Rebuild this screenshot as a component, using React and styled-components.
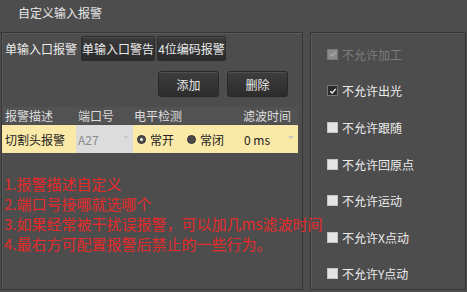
import React from "react";
import styled, { createGlobalStyle } from "styled-components";

const Global = createGlobalStyle`
  html, body { margin: 0; padding: 0; background: #4d4d4d; }
  body { font-family: "Noto Sans CJK SC", "Noto Sans", sans-serif; }
`;

const Window = styled.div`
  width: 467px;
  height: 292px;
  background: #4d4d4d;
  display: flex;
  flex-direction: column;
  overflow: hidden;
  color: #e8e8e8;
  font-size: 12px;
`;

const Title = styled.div`
  height: 32px;
  box-sizing: border-box;
  padding: 5px 0 0 18px;
  font-size: 12px;
  line-height: 16px;
  color: #e6e6e6;
`;

const Body = styled.div`
  display: flex;
  gap: 7px;
  padding-left: 1px;
  height: 258px;
`;

const Panel = styled.div`
  box-sizing: border-box;
  width: ${(p) => p.$w}px;
  height: 100%;
  border: 1px solid #363636;
  box-shadow: inset 1px 1px 0 #5a5a5a;
  background: #4d4d4d;
  position: relative;
`;

const Tabs = styled.div`
  display: flex;
  gap: 2px;
  padding: 3px 0 0 1px;
`;

const Tab = styled.div`
  box-sizing: border-box;
  width: ${(p) => p.$w}px;
  height: 25px;
  display: flex;
  align-items: center;
  justify-content: center;
  font-size: 12px;
  color: #ececec;
  ${(p) =>
    p.$active
      ? `background: transparent;`
      : `background: linear-gradient(#3c3c3c, #2a2a2a);
         border: 1px solid #2c2c2c;
         border-radius: 2px;
         box-shadow: inset 0 1px 0 #4a4a4a;`}
`;

const ButtonRow = styled.div`
  display: flex;
  justify-content: flex-end;
  gap: 8px;
  padding: 10px 14px 0 0;
`;

const Button = styled.div`
  box-sizing: border-box;
  width: 61px;
  height: 26px;
  display: flex;
  align-items: center;
  justify-content: center;
  background: linear-gradient(#3e3e3e, #2c2c2c);
  border: 1px solid #292929;
  border-radius: 3px;
  box-shadow: inset 0 1px 0 #505050;
  color: #e8e8e8;
  font-size: 12px;
`;

const Table = styled.div`
  margin-top: 10px;
  width: 296px;
`;

const HeaderRow = styled.div`
  display: grid;
  grid-template-columns: 74px 57px 108px 57px;
  height: 17px;
  align-items: center;
  background: #525252;
  color: #dcdcdc;
  font-size: 12px;
`;

const HeadCell = styled.div`
  padding-left: ${(p) => p.$pl || 3}px;
`;

const DataRow = styled.div`
  display: grid;
  grid-template-columns: 74px 57px 108px 57px;
  height: 28px;
  margin-top: 1px;
  background: #fbe9a8;
  color: #222;
  font-size: 12px;
`;

const Cell = styled.div`
  display: flex;
  align-items: center;
  position: relative;
  padding-left: ${(p) => p.$pl || 3}px;
  background: ${(p) => p.$bg || "transparent"};
  color: ${(p) => p.$color || "#222"};
`;

const Caret = styled.span`
  position: absolute;
  right: ${(p) => p.$r}px;
  top: 11px;
  width: 0;
  height: 0;
  border-left: 3px solid transparent;
  border-right: 3px solid transparent;
  border-top: 3px solid #c8c8c8;
`;

const RadioGroup = styled.div`
  display: flex;
  align-items: center;
`;

const RadioItem = styled.div`
  display: flex;
  align-items: center;
  width: ${(p) => p.$w}px;
`;

const RadioDot = styled.span`
  box-sizing: border-box;
  width: 9px;
  height: 9px;
  border-radius: 50%;
  background: #4a4a4a;
  border: 1px solid #333;
  margin-right: 4px;
  display: flex;
  align-items: center;
  justify-content: center;
  &::after {
    content: "";
    width: 3px;
    height: 3px;
    border-radius: 50%;
    background: ${(p) => (p.$on ? "#f4f4f4" : "transparent")};
  }
`;

const Notes = styled.div`
  margin-top: 21px;
  padding-left: 2px;
  color: #e42b2b;
  font-size: 15px;
  line-height: 20px;
  white-space: nowrap;
  position: relative;
  z-index: 2;
`;

const CheckList = styled.div`
  display: flex;
  flex-direction: column;
  gap: 24px;
  padding: 15px 0 0 16px;
`;

const CheckRow = styled.div`
  display: flex;
  align-items: center;
  height: 12.6px;
  font-size: 12px;
  color: ${(p) => (p.$disabled ? "#7c7c7c" : "#ececec")};
`;

const Box = styled.span`
  box-sizing: border-box;
  width: 11px;
  height: 11px;
  margin-right: 4px;
  display: flex;
  align-items: center;
  justify-content: center;
  background: ${(p) =>
    p.$disabled ? "#8a8a8a" : p.$checked ? "#2b2b2b" : "#e4e4e4"};
  border: 1px solid ${(p) => (p.$disabled ? "#7a7a7a" : p.$checked ? "#777" : "#c4c4c4")};
`;

const Check = ({ color }) => (
  <svg width="8" height="8" viewBox="0 0 8 8">
    <path d="M1.2 4.2 L3.2 6 L6.8 1.8" fill="none" stroke={color} strokeWidth="1.3" />
  </svg>
);

const checks = [
  { label: "不允许加工", disabled: true, checked: true },
  { label: "不允许出光", checked: true },
  { label: "不允许跟随" },
  { label: "不允许回原点" },
  { label: "不允许运动" },
  { label: "不允许X点动" },
  { label: "不允许Y点动" },
];

export default function App() {
  return (
    <>
      <Global />
      <Window>
        <Title>自定义输入报警</Title>
        <Body>
          <Panel $w={302}>
            <Tabs>
              <Tab $w={76} $active>单输入口报警</Tab>
              <Tab $w={74}>单输入口警告</Tab>
              <Tab $w={69}>4位编码报警</Tab>
            </Tabs>
            <ButtonRow>
              <Button>添加</Button>
              <Button>删除</Button>
            </ButtonRow>
            <Table>
              <HeaderRow>
                <HeadCell $pl={3}>报警描述</HeadCell>
                <HeadCell $pl={2}>端口号</HeadCell>
                <HeadCell $pl={1}>电平检测</HeadCell>
                <HeadCell $pl={2}>滤波时间</HeadCell>
              </HeaderRow>
              <DataRow>
                <Cell $pl={3}>切割头报警</Cell>
                <Cell $pl={2} $bg="#dcdcdc" $color="#8a8a8a">
                  A27
                  <Caret $r={4} />
                </Cell>
                <Cell $pl={4}>
                  <RadioGroup>
                    <RadioItem $w={50}>
                      <RadioDot $on />
                      常开
                    </RadioItem>
                    <RadioItem $w={50}>
                      <RadioDot />
                      常闭
                    </RadioItem>
                  </RadioGroup>
                </Cell>
                <Cell $pl={3}>
                  0 ms
                  <Caret $r={4} />
                </Cell>
              </DataRow>
            </Table>
            <Notes>
              <div>1.报警描述自定义</div>
              <div>2.端口号接哪就选哪个</div>
              <div>3.如果经常被干扰误报警，可以加几ms滤波时间</div>
              <div>4.最右方可配置报警后禁止的一些行为。</div>
            </Notes>
          </Panel>
          <Panel $w={156}>
            <CheckList>
              {checks.map((c) => (
                <CheckRow key={c.label} $disabled={c.disabled}>
                  <Box $disabled={c.disabled} $checked={c.checked}>
                    {c.checked && <Check color={c.disabled ? "#a8a8a8" : "#f0f0f0"} />}
                  </Box>
                  {c.label}
                </CheckRow>
              ))}
            </CheckList>
          </Panel>
        </Body>
      </Window>
    </>
  );
}
